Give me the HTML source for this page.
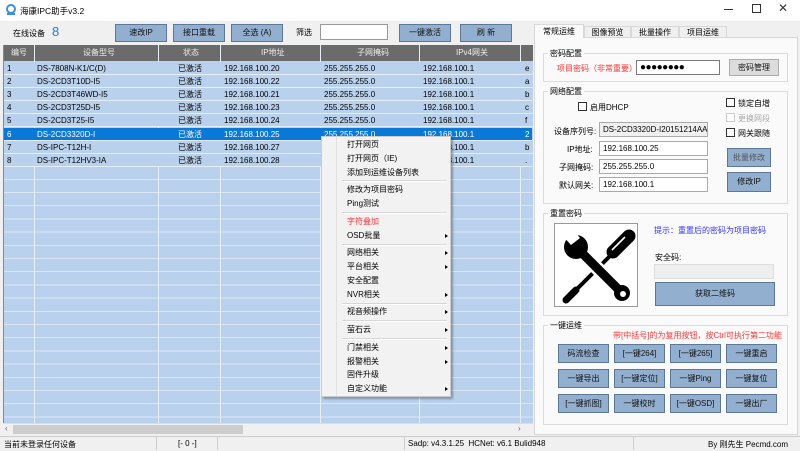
<!DOCTYPE html>
<html><head><meta charset="utf-8"><style>
*{box-sizing:border-box;margin:0;padding:0}
body{width:800px;height:451px;overflow:hidden;background:#f0f0f0;font-family:"Liberation Sans","Noto Sans CJK SC",sans-serif;font-size:8px;color:#000;position:relative}
.a{position:absolute}
.btn{position:absolute;background:#93afd0;border:1px solid #5d7797;text-align:center;font-size:8px;line-height:15px;color:#111}
.row{position:absolute;left:4px;width:528px;height:13px;line-height:13px;background:#b9d1ec;border-bottom:1px solid #e6eef8}
.row span,.hd span{position:absolute;top:0}
.vl{position:absolute;top:45px;height:378px;width:1px;background:#e6eef8}
.menu{position:absolute;left:321px;top:136px;width:130px;height:261px;background:#f2f2f2;border:1px solid #ccc;box-shadow:2px 2px 2px rgba(0,0,0,.3)}
.mi{position:absolute;left:25px;font-size:8px;line-height:10px}
.ar{position:absolute;left:123px;width:0;height:0;border-left:3px solid #000;border-top:2.5px solid transparent;border-bottom:2.5px solid transparent}
.sep{position:absolute;left:20px;width:105px;height:2px;border-top:1px solid #d6d6d6;border-bottom:1px solid #fff}
.grp{position:absolute;border:1px solid #dcdcdc;background:#fafafa}
.gt{position:absolute;background:#fafafa;padding:0 2px;top:-6px;left:4px;font-size:8px}
.inp{position:absolute;background:#fff;border:1px solid #7a7a7a;font-size:8px;line-height:13px;padding-left:3px}
.cb{position:absolute;width:9px;height:9px;border:1px solid #333;background:#fff}
</style></head><body>
<div class="a" style="left:0;top:0;width:800px;height:21px;background:#fff"></div>
<svg class="a" style="left:5px;top:4px" width="12" height="12" viewBox="0 0 12 12"><circle cx="6" cy="5" r="4" fill="none" stroke="#3b8fd8" stroke-width="2"/><rect x="2" y="9" width="8" height="2" fill="#3b8fd8"/></svg>
<div class="a" style="left:20px;top:5px;font-size:8.5px">海康IPC助手v3.2</div>
<div class="a" style="left:724px;top:9px;width:9px;height:1px;background:#333"></div>
<div class="a" style="left:752px;top:4px;width:9px;height:9px;border:1px solid #333"></div>
<div class="a" style="left:778px;top:1px;font-size:12px;color:#333">✕</div>
<div class="a" style="left:13px;top:28px;font-size:8px">在线设备</div>
<div class="a" style="left:52px;top:24px;font-size:13px;color:#1e7fe0">8</div>
<div class="btn" style="left:115px;top:24px;width:52px;height:18px">速改IP</div>
<div class="btn" style="left:173px;top:24px;width:52px;height:18px">接口重载</div>
<div class="btn" style="left:231px;top:24px;width:52px;height:18px">全选 (A)</div>
<div class="a" style="left:296px;top:27px">筛选</div>
<div class="inp" style="left:320px;top:24px;width:68px;height:16px;border-color:#999"></div>
<div class="btn" style="left:399px;top:24px;width:52px;height:18px">一键激活</div>
<div class="btn" style="left:460px;top:24px;width:52px;height:18px">刷 新</div>
<div class="a" style="left:3px;top:45px;width:530px;height:378px;background:#b9d1ec"></div>
<div class="a" style="left:3px;top:45px;width:530px;height:16px;background:#6b6b6b"></div>
<div class="hd a" style="left:3px;top:45px;width:530px;height:16px;line-height:16px;color:#eee">
<span style="left:8px">编号</span><span style="left:80px">设备型号</span><span style="left:180px">状态</span><span style="left:258px">IP地址</span><span style="left:354px">子网掩码</span><span style="left:453px">IPv4网关</span></div>
<div class="a" style="left:3px;top:61px;width:530px;height:362px;background:repeating-linear-gradient(#b9d1ec 0 12.2px,#dbe6f4 12.2px 13.2px)"></div>
<div class="vl" style="left:34px"></div><div class="vl" style="left:158px"></div><div class="vl" style="left:220px"></div><div class="vl" style="left:320px"></div><div class="vl" style="left:419px"></div><div class="vl" style="left:520px"></div>
<div class="a" style="left:3px;top:45px;width:1px;height:378px;background:#888"></div>
<div class="row" style="top:61.5px"><span style="left:3px">1</span><span style="left:33px">DS-7808N-K1/C(D)</span><span style="left:174px">已激活</span><span style="left:220px">192.168.100.20</span><span style="left:320px">255.255.255.0</span><span style="left:419px">192.168.100.1</span><span style="left:521px">e</span></div>
<div class="row" style="top:74.7px"><span style="left:3px">2</span><span style="left:33px">DS-2CD3T10D-I5</span><span style="left:174px">已激活</span><span style="left:220px">192.168.100.22</span><span style="left:320px">255.255.255.0</span><span style="left:419px">192.168.100.1</span><span style="left:521px">a</span></div>
<div class="row" style="top:87.9px"><span style="left:3px">3</span><span style="left:33px">DS-2CD3T46WD-I5</span><span style="left:174px">已激活</span><span style="left:220px">192.168.100.21</span><span style="left:320px">255.255.255.0</span><span style="left:419px">192.168.100.1</span><span style="left:521px">b</span></div>
<div class="row" style="top:101.1px"><span style="left:3px">4</span><span style="left:33px">DS-2CD3T25D-I5</span><span style="left:174px">已激活</span><span style="left:220px">192.168.100.23</span><span style="left:320px">255.255.255.0</span><span style="left:419px">192.168.100.1</span><span style="left:521px">c</span></div>
<div class="row" style="top:114.3px"><span style="left:3px">5</span><span style="left:33px">DS-2CD3T25-I5</span><span style="left:174px">已激活</span><span style="left:220px">192.168.100.24</span><span style="left:320px">255.255.255.0</span><span style="left:419px">192.168.100.1</span><span style="left:521px">f</span></div>
<div class="row" style="top:127.5px;background:#0a78d7;color:#fff"><span style="left:3px">6</span><span style="left:33px">DS-2CD3320D-I</span><span style="left:174px">已激活</span><span style="left:220px">192.168.100.25</span><span style="left:320px">255.255.255.0</span><span style="left:419px">192.168.100.1</span><span style="left:521px">2</span></div>
<div class="row" style="top:140.7px"><span style="left:3px">7</span><span style="left:33px">DS-IPC-T12H-I</span><span style="left:174px">已激活</span><span style="left:220px">192.168.100.27</span><span style="left:320px">255.255.255.0</span><span style="left:419px">192.168.100.1</span><span style="left:521px">b</span></div>
<div class="row" style="top:153.9px"><span style="left:3px">8</span><span style="left:33px">DS-IPC-T12HV3-IA</span><span style="left:174px">已激活</span><span style="left:220px">192.168.100.28</span><span style="left:320px">255.255.255.0</span><span style="left:419px">192.168.100.1</span><span style="left:521px">.</span></div>
<div class="a" style="left:3px;top:423px;width:530px;height:12px;background:#f0f0f0;border-top:1px solid #ddd"></div>
<div class="a" style="left:13px;top:425px;width:230px;height:9px;background:#cdcdcd"></div>
<div class="a" style="left:5px;top:424px;font-size:8px;color:#666">‹</div>
<div class="a" style="left:518px;top:424px;font-size:8px;color:#666">›</div>
<div class="a" style="left:0;top:436px;width:800px;height:15px;background:#f0f0f0;border-top:1px solid #ccc"></div>
<div class="a" style="left:4px;top:439px">当前未登录任何设备</div>
<div class="a" style="left:156px;top:437px;width:1px;height:13px;background:#ccc"></div>
<div class="a" style="left:178px;top:439px">[- 0 -]</div>
<div class="a" style="left:217px;top:437px;width:1px;height:13px;background:#ccc"></div>
<div class="a" style="left:404px;top:437px;width:1px;height:13px;background:#ccc"></div>
<div class="a" style="left:408px;top:439px">Sadp: v4.3.1.25&nbsp;&nbsp;HCNet: v6.1 Bulid948</div>
<div class="a" style="left:633px;top:437px;width:1px;height:13px;background:#ccc"></div>
<div class="a" style="left:708px;top:439px">By 刚先生 Pecmd.com</div>
<div class="a" style="left:534px;top:37px;width:264px;height:398px;background:#fafafa;border:1px solid #d8d8d8"></div>
<div class="a" style="left:534px;top:24px;width:50px;height:14px;background:#fafafa;border:1px solid #d8d8d8;border-bottom:none;line-height:13px;text-align:center">常规运维</div>
<div class="a" style="left:584px;top:26px;width:47px;height:12px;background:#f0f0f0;border:1px solid #d8d8d8;line-height:11px;text-align:center">图像预览</div>
<div class="a" style="left:631px;top:26px;width:48px;height:12px;background:#f0f0f0;border:1px solid #d8d8d8;line-height:11px;text-align:center">批量操作</div>
<div class="a" style="left:679px;top:26px;width:48px;height:12px;background:#f0f0f0;border:1px solid #d8d8d8;line-height:11px;text-align:center">项目运维</div>
<div class="grp" style="left:543px;top:53px;width:245px;height:29px"><div class="gt">密码配置</div></div>
<div class="a" style="left:557px;top:63px;color:#f33">项目密码（非常重要）</div>
<div class="inp" style="left:636px;top:60px;width:84px;height:15px;font-size:10px;letter-spacing:-0.5px;line-height:13px">●●●●●●●●</div>
<div class="btn" style="left:729px;top:59px;width:50px;height:17px;background:#dcdcdc;border-color:#adadad">密码管理</div>
<div class="grp" style="left:543px;top:91px;width:245px;height:113px"><div class="gt">网络配置</div></div>
<div class="cb" style="left:578px;top:102px"></div><div class="a" style="left:590px;top:102px">启用DHCP</div>
<div class="cb" style="left:726px;top:98px"></div><div class="a" style="left:738px;top:98px">锁定自增</div>
<div class="cb" style="left:726px;top:113px;border-color:#ccc"></div><div class="a" style="left:738px;top:113px;color:#aaa">更换网段</div>
<div class="cb" style="left:726px;top:128px"></div><div class="a" style="left:738px;top:128px">网关跟随</div>
<div class="a" style="left:554px;top:126px">设备序列号:</div>
<div class="inp" style="left:599px;top:122px;width:109px;height:15px;background:#f0f0f0;border-color:#aaa;overflow:hidden;white-space:nowrap">DS-2CD3320D-I20151214AAC</div>
<div class="a" style="left:567px;top:144px">IP地址:</div>
<div class="inp" style="left:599px;top:141px;width:109px;height:15px;border-color:#aaa">192.168.100.25</div>
<div class="a" style="left:559px;top:162px">子网掩码:</div>
<div class="inp" style="left:599px;top:159px;width:109px;height:15px;border-color:#aaa">255.255.255.0</div>
<div class="a" style="left:559px;top:180px">默认网关:</div>
<div class="inp" style="left:599px;top:177px;width:109px;height:15px;border-color:#aaa">192.168.100.1</div>
<div class="btn" style="left:727px;top:148px;width:44px;height:19px;line-height:17px;color:#555">批量修改</div>
<div class="btn" style="left:727px;top:172px;width:44px;height:20px;line-height:18px">修改IP</div>
<div class="grp" style="left:543px;top:213px;width:245px;height:103px"><div class="gt">重置密码</div></div>
<div class="a" style="left:554px;top:223px;width:84px;height:84px;background:#fff;border:1px solid #999"></div>
<svg class="a" style="left:554px;top:223px" width="84" height="84" viewBox="0 0 84 84">
<g stroke="#000" stroke-linecap="round">
<line x1="75" y1="13" x2="59" y2="29" stroke-width="13"/>
<line x1="58" y1="31" x2="18" y2="71" stroke-width="4"/>
<line x1="22" y1="67" x2="12" y2="77" stroke-width="7"/>
</g>
<path d="M65 10 l-13 13 M71 14 l-13 13" stroke="#fff" stroke-width="1.6"/>
<g stroke="#fff" stroke-width="3" fill="#000">
<line x1="22" y1="24" x2="68" y2="70" stroke-width="14" stroke-linecap="round"/>
</g>
<g fill="#000">
<line x1="22" y1="24" x2="68" y2="70" stroke="#000" stroke-width="9" stroke-linecap="round"/>
<circle cx="22" cy="24" r="12"/>
<circle cx="68" cy="70" r="8"/>
</g>
<polygon points="8,12 17,4 26,15 17,22" fill="#fff"/>
<circle cx="69" cy="71" r="3" fill="#fff"/>
</svg>
<div class="a" style="left:654px;top:225px;color:#33f">提示：重置后的密码为项目密码</div>
<div class="a" style="left:655px;top:252px">安全码:</div>
<div class="a" style="left:654px;top:264px;width:120px;height:15px;background:#eee;border:1px solid #ddd"></div>
<div class="btn" style="left:655px;top:282px;width:120px;height:24px;line-height:22px">获取二维码</div>
<div class="grp" style="left:543px;top:325px;width:245px;height:100px"><div class="gt">一键运维</div></div>
<div class="a" style="left:613px;top:330px;color:#f33">带[中括号]的为复用按钮，按Ctrl可执行第二功能</div>
<div class="btn" style="left:558px;top:344px;width:51px;height:19px;line-height:17px">码流检查</div>
<div class="btn" style="left:614px;top:344px;width:51px;height:19px;line-height:17px">[一键264]</div>
<div class="btn" style="left:670px;top:344px;width:51px;height:19px;line-height:17px">[一键265]</div>
<div class="btn" style="left:726px;top:344px;width:51px;height:19px;line-height:17px">一键重启</div>
<div class="btn" style="left:558px;top:369px;width:51px;height:19px;line-height:17px">一键导出</div>
<div class="btn" style="left:614px;top:369px;width:51px;height:19px;line-height:17px">[一键定位]</div>
<div class="btn" style="left:670px;top:369px;width:51px;height:19px;line-height:17px">一键Ping</div>
<div class="btn" style="left:726px;top:369px;width:51px;height:19px;line-height:17px">一键复位</div>
<div class="btn" style="left:558px;top:394px;width:51px;height:19px;line-height:17px">[一键抓图]</div>
<div class="btn" style="left:614px;top:394px;width:51px;height:19px;line-height:17px">一键校时</div>
<div class="btn" style="left:670px;top:394px;width:51px;height:19px;line-height:17px">[一键OSD]</div>
<div class="btn" style="left:726px;top:394px;width:51px;height:19px;line-height:17px">一键出厂</div>
<div class="menu">
<div class="a" style="left:14px;top:0;width:1px;height:259px;background:#e0e0e0"></div>
<div class="mi" style="top:3px">打开网页</div>
<div class="mi" style="top:17px">打开网页（IE)</div>
<div class="mi" style="top:31px">添加到运维设备列表</div>
<div class="sep" style="top:43px"></div>
<div class="mi" style="top:48px">修改为项目密码</div>
<div class="mi" style="top:62px">Ping测试</div>
<div class="sep" style="top:75px"></div>
<div class="mi" style="top:80px;color:#f33">字符叠加</div>
<div class="mi" style="top:94px">OSD批量</div><div class="ar" style="top:97px"></div>
<div class="sep" style="top:107px"></div>
<div class="mi" style="top:111px">网络相关</div><div class="ar" style="top:114px"></div>
<div class="mi" style="top:125px">平台相关</div><div class="ar" style="top:128px"></div>
<div class="mi" style="top:139px">安全配置</div>
<div class="mi" style="top:153px">NVR相关</div><div class="ar" style="top:156px"></div>
<div class="sep" style="top:166px"></div>
<div class="mi" style="top:170px">视音频操作</div><div class="ar" style="top:173px"></div>
<div class="sep" style="top:183px"></div>
<div class="mi" style="top:188px">萤石云</div><div class="ar" style="top:191px"></div>
<div class="sep" style="top:201px"></div>
<div class="mi" style="top:206px">门禁相关</div><div class="ar" style="top:209px"></div>
<div class="mi" style="top:220px">报警相关</div><div class="ar" style="top:223px"></div>
<div class="mi" style="top:233px">固件升级</div>
<div class="mi" style="top:247px">自定义功能</div><div class="ar" style="top:250px"></div>
</div>
</body></html>
